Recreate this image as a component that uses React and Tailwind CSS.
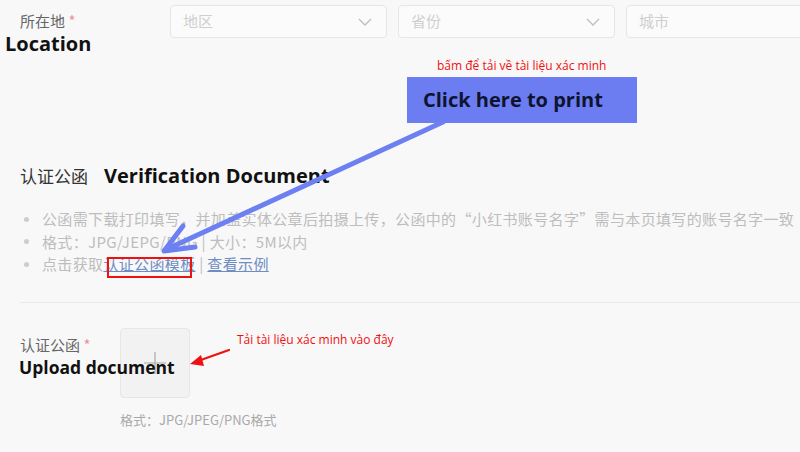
import React from "react";

function Select({ text, chevron = true }) {
  return (
    <div className="flex items-center justify-between w-[217px] h-[33px] shrink-0 rounded-[4px] border border-[#e6e6e6] bg-[#fbfbfb] pl-[12px] pr-[14px]">
      <span className="text-[15px] text-[#cfcfcf]">{text}</span>
      {chevron && (
        <svg width="14" height="8" viewBox="0 0 14 8" fill="none">
          <path d="M1 1l6 6 6-6" stroke="#bdbdbd" strokeWidth="1.3" />
        </svg>
      )}
    </div>
  );
}

export default function App() {
  return (
    <div className="relative w-[800px] h-[452px] overflow-hidden bg-[#f8f8f8] font-['Noto_Sans_CJK_SC',sans-serif]">
      {/* Row 1: location */}
      <div className="flex items-start pt-[5px]">
        <div className="w-[170px] shrink-0 pl-[20px] pt-[5px]">
          <div className="text-[15px] leading-[22px] text-[#666]">
            所在地 <span className="text-[#ee8f9c]">*</span>
          </div>
        </div>
        <div className="flex gap-[11px]">
          <Select text="地区" />
          <Select text="省份" />
          <Select text="城市" chevron={false} />
        </div>
      </div>

      {/* Section: verification document */}
      <div className="mt-[125px] pl-[20px] flex items-center h-[26px]">
        <span className="text-[17px] text-[#333]">认证公函</span>
        <span className="ml-[16px] font-['Open_Sans',sans-serif] font-bold text-[20px] text-[#111]">
          Verification Document
        </span>
      </div>

      <ul className="mt-[19px] pl-[24px] text-[15px] tracking-[0.35px] text-[#bdbdbd]">
        <li className="flex items-center h-[22.5px]">
          <span className="w-[5px] h-[5px] rounded-full bg-[#cdcdcd] mr-[13px]" />
          <span className="whitespace-nowrap">
            公函需下载打印填写，并加盖实体公章后拍摄上传，公函中的“小红书账号名字”需与本页填写的账号名字一致
          </span>
        </li>
        <li className="flex items-center h-[22.5px]">
          <span className="w-[5px] h-[5px] rounded-full bg-[#cdcdcd] mr-[13px]" />
          <span className="whitespace-nowrap">格式：JPG/JEPG/PNG | 大小：5M以内</span>
        </li>
        <li className="flex items-center h-[22.5px]">
          <span className="w-[5px] h-[5px] rounded-full bg-[#cdcdcd] mr-[13px]" />
          <span className="whitespace-nowrap">
            点击获取
            <span className="text-[#6f8cc4] underline">认证公函模板</span>
            <span> | </span>
            <span className="text-[#6f8cc4] underline">查看示例</span>
          </span>
        </li>
      </ul>

      <div className="mt-[26px] ml-[20px] border-t border-[#e9e9e9]" />

      {/* Upload row */}
      <div className="flex pl-[20px] mt-[25px]">
        <div className="w-[100px] pt-[8px] text-[15px] leading-[18px] text-[#666]">
          认证公函 <span className="text-[#ee8f9c]">*</span>
        </div>
        <div className="flex flex-col">
          <div className="relative w-[70px] h-[70px] rounded-[4px] border border-[#e6e6e6] bg-[#f2f2f2] flex items-center justify-center">
            <svg width="24" height="24" viewBox="0 0 24 24">
              <path d="M12 1v22M1 12h22" stroke="#a8a8a8" strokeWidth="1.2" />
            </svg>
          </div>
          <div className="mt-[12px] text-[13px] text-[#a9a9a9] whitespace-nowrap">格式：JPG/JPEG/PNG格式</div>
        </div>
      </div>

      {/* Annotations */}
      <div className="absolute left-[5px] top-[30px] font-['Open_Sans',sans-serif] font-bold text-[20px] leading-[28px] text-[#111]">
        Location
      </div>

      <div className="absolute left-[437px] top-[58px] font-['Open_Sans',sans-serif] text-[12px] leading-[16px] text-[#f01010] whitespace-nowrap">
        bấm để tải về tài liệu xác minh
      </div>

      <div className="absolute left-[407px] top-[77px] w-[230px] h-[46px] bg-[#6b7df0] flex items-center pl-[16px]">
        <span className="font-['Open_Sans',sans-serif] font-bold text-[20px] text-[#0e1430] whitespace-nowrap">
          Click here to print
        </span>
      </div>

      <svg className="absolute left-0 top-0" width="800" height="452" viewBox="0 0 800 452" fill="none">
        <path d="M443 122L165 250" stroke="#6c80f2" strokeWidth="5" strokeLinecap="round" />
        <path d="M183 226L164 251L195 247" stroke="#6c80f2" strokeWidth="5" strokeLinecap="round" strokeLinejoin="round" />
        <path d="M229 350L198 361" stroke="#ee1111" strokeWidth="2.2" strokeLinecap="round" />
        <path d="M190 364L201 355L204 366Z" fill="#ee1111" />
      </svg>

      <div className="absolute left-[107px] top-[257px] w-[85px] h-[21px] border-2 border-[#ee1111]" />

      <div className="absolute left-[19px] top-[358px] font-['Open_Sans',sans-serif] font-bold text-[17.5px] leading-[18px] text-[#111] whitespace-nowrap">
        Upload document
      </div>

      <div className="absolute left-[237px] top-[332px] font-['Open_Sans',sans-serif] text-[12px] leading-[16px] text-[#f01010] whitespace-nowrap">
        Tải tài liệu xác minh vào đây
      </div>
    </div>
  );
}
